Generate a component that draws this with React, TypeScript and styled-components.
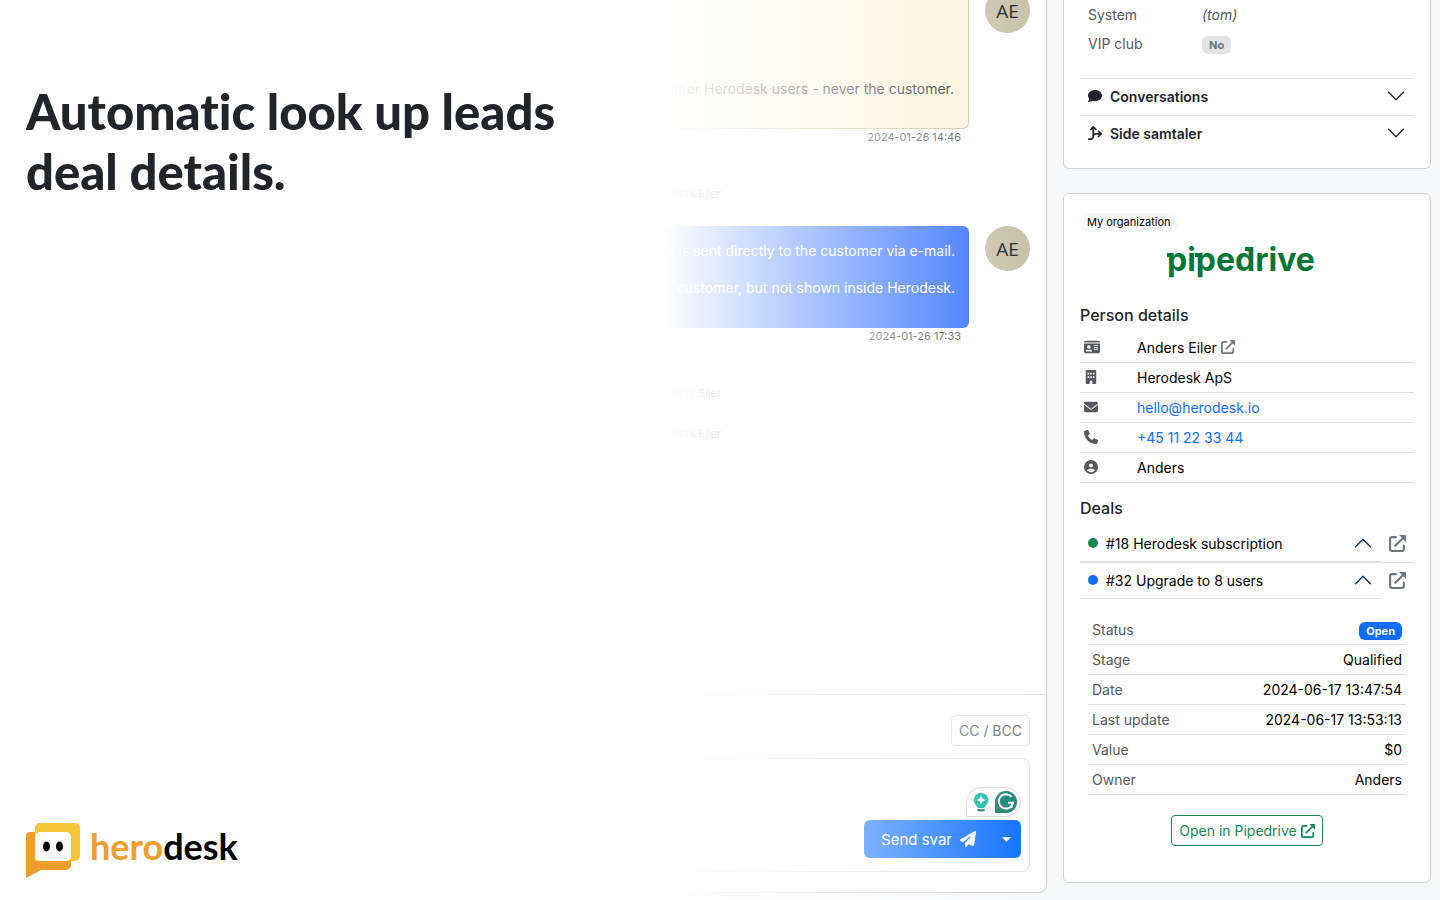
import React from 'react';
import styled, { createGlobalStyle, css } from 'styled-components';
import {
  FaComment, FaArrowsSplitUpAndLeft, FaIdCard, FaBuilding, FaEnvelope, FaPhone,
  FaCircleUser, FaPaperPlane,
} from 'react-icons/fa6';

const GlobalStyle = createGlobalStyle`
  *, *::before, *::after { box-sizing: border-box; }
  body { margin: 0; background: #f7f8fa; color: #212529; font: 14px/21px Inter, "Liberation Sans", sans-serif; }
  h1, h2, p { margin: 0; }
  button { font: inherit; color: inherit; background: none; border: 0; padding: 0; cursor: pointer; }
  a { color: #0d6efd; text-decoration: none; }
  svg { display: block; flex: none; }
`;

const Page = styled.div`
  position: relative;
  display: flex;
  gap: 16px;
  min-height: 100vh;
  padding-right: 9px;
  overflow: hidden;
`;

const Conversation = styled.main`
  flex: 1;
  display: flex;
  flex-direction: column;
  margin-bottom: 7px;
  background: #fff;
  border: 1px solid #ced2d6;
  border-width: 0 1px 1px 0;
  border-radius: 0 0 8px 0;
`;

const Thread = styled.div`
  flex: 1;
  display: flex;
  flex-direction: column;
  padding-right: 16px;
`;

const Message = styled.article`
  display: flex;
  align-items: flex-start;
  gap: 16px;
`;

const MessageBody = styled.div`
  flex: 1;
  display: flex;
  flex-direction: column;
  text-align: right;
`;

const Bubble = styled.div<{ $kind: 'note' | 'reply' }>`
  display: flex;
  flex-direction: column;
  gap: 16px;
  margin-left: 40%;
  border-radius: 6px;
  ${({ $kind }) => $kind === 'note' ? css`
    padding: 78px 14px 29px;
    background: #fff5dd;
    color: #212529;
    border: 1px solid #cbbf9f;
    border-top: 0;
    border-radius: 0 0 6px 6px;
  ` : css`
    padding: 14px 14px 30px;
    background: #2f6cff;
    color: #fff;
  `}
`;

const Time = styled.time`
  padding: 0 8px;
  color: #4c5054;
  font-size: 11px;
  line-height: 17px;
`;

const Avatar = styled.div<{ $cut?: boolean }>`
  display: flex;
  align-items: center;
  justify-content: center;
  width: 45px;
  height: 45px;
  margin-top: ${({ $cut }) => ($cut ? '-12px' : '0')};
  border-radius: 50%;
  background: #c6c1aa;
  color: #1c1c1c;
  font: 19px/20px "Open Sans", sans-serif;
`;

const Event = styled.p<{ $gap: number }>`
  width: 70%;
  margin-top: ${({ $gap }) => $gap}px;
  color: #5c6064;
  font-size: 11px;
  line-height: 16px;
  text-align: right;
  & + ${Message} { margin-top: 24px; }
`;

const Composer = styled.section`
  display: flex;
  flex-direction: column;
  align-items: flex-end;
  gap: 12px;
  padding: 20px 16px;
  border-top: 1px solid #dee2e6;
`;

const CopyButton = styled.button`
  height: 31px;
  padding: 0 7px;
  border: 1px solid #dee2e6;
  border-radius: 4px;
  color: #6c757d;
`;

const Editor = styled.div`
  align-self: stretch;
  display: flex;
  flex-direction: column;
  align-items: flex-end;
  gap: 3px;
  padding: 28px 8px 13px;
  border: 1px solid #dee2e6;
  border-radius: 8px;
`;

const Assistant = styled.div`
  display: flex;
  align-items: center;
  gap: 6px;
  height: 30px;
  padding: 0 3px 0 6px;
  border: 1px solid #d3d6e2;
  border-radius: 15px 15px 15px 0;
`;

const SendGroup = styled.div`
  display: flex;
  height: 38px;
  border-radius: 6px;
  background: #0d6efd;
  color: #fff;
  font-size: 15px;
`;

const SendButton = styled.button`
  display: flex;
  align-items: center;
  gap: 8px;
  padding: 0 12px 0 17px;
`;

const SendMenu = styled.button`
  padding: 0 10px 0 14px;
`;

const Side = styled.aside`
  flex: 0 0 368px;
  display: flex;
  flex-direction: column;
  gap: 24px;
  padding-bottom: 17px;
`;

const Card = styled.section<{ $cut?: boolean }>`
  display: flex;
  flex-direction: column;
  padding: ${({ $cut }) => ($cut ? '0 16px 16px' : '16px 16px 36px')};
  border: 1px solid #ced2d6;
  border-radius: 6px;
  background: #fff;
  ${({ $cut }) => $cut && css`
    border-top: 0;
    border-radius: 0 0 6px 6px;
  `}
`;

const Fields = styled.table`
  border-collapse: collapse;
  margin: 0 0 20px 8px;
  color: #55595d;
  th { width: 114px; padding: 4px 0; font-weight: 400; text-align: left; }
  td { padding: 4px 0; }
`;

const Badge = styled.span<{ $tone: 'muted' | 'light' | 'primary' }>`
  display: inline-block;
  padding: 0 7px;
  border-radius: 6px;
  font-size: 11px;
  line-height: 18px;
  vertical-align: middle;
  font-weight: ${({ $tone }) => ($tone === 'light' ? 400 : 700)};
  color: ${({ $tone }) => ({ muted: '#6c757d', light: '#000', primary: '#fff' })[$tone]};
  background: ${({ $tone }) => ({ muted: '#e2e3e5', light: '#f8f9fa', primary: '#0d6efd' })[$tone]};
`;

const Fold = styled.button`
  display: flex;
  align-items: center;
  gap: 8px;
  height: 37px;
  padding: 0 8px 2px;
  border-top: 1px solid #dee2e6;
  font-weight: 600;
  text-align: left;
  span { flex: 1; }
`;

const BrandRow = styled.div`
  display: flex;
  justify-content: center;
  height: 74px;
  margin-right: 12px;
`;

const SectionTitle = styled.h2`
  font-size: 16px;
  line-height: 20px;
  font-weight: 500;
`;

const PersonTable = styled.table`
  width: 100%;
  margin: 7px 0 15px;
  border-collapse: collapse;
  color: #000;
  tr { height: 30px; border-bottom: 1px solid #dee2e6; }
  th { width: 53px; padding: 0 4px; color: #55595d; }
  td { padding: 0 4px; }
`;

const Inline = styled.span`
  display: flex;
  align-items: center;
  gap: 4px;
`;

const IconLink = styled.a`
  display: flex;
  color: #6c757d;
`;

const Deals = styled.div`
  display: flex;
  flex-direction: column;
  margin-top: 8px;
`;

const DealRow = styled.div<{ $open?: boolean }>`
  display: flex;
  align-items: center;
  gap: 8px;
  height: 37px;
  padding-right: 8px;
  border-bottom: 1px solid ${({ $open }) => ($open ? 'transparent' : '#dee2e6')};
`;

const DealToggle = styled.button`
  flex: 1;
  align-self: stretch;
  display: flex;
  align-items: center;
  gap: 8px;
  padding: 0 8px;
  border-bottom: 1px solid #dee2e6;
  color: #000;
  text-align: left;
  span { flex: 1; }
`;

const Dot = styled.i<{ $color: string }>`
  width: 10px;
  height: 10px;
  border-radius: 50%;
  background: ${({ $color }) => $color};
`;

const DealTable = styled.table`
  margin: 15px 8px 20px;
  border-collapse: collapse;
  color: #000;
  tr { height: 30px; border-bottom: 1px solid #dee2e6; }
  th { padding: 0 4px; color: #55595d; font-weight: 400; text-align: left; }
  td { padding: 0 4px; text-align: right; }
`;

const OpenLink = styled.a`
  align-self: center;
  display: flex;
  align-items: center;
  gap: 4px;
  height: 31px;
  padding: 0 7px;
  border: 1px solid #198754;
  border-radius: 4px;
  color: #198754;
`;

const Hero = styled.header`
  position: absolute;
  inset: 0;
  display: flex;
  flex-direction: column;
  justify-content: space-between;
  padding: 81px 26px 21px;
  background: linear-gradient(to right, #fff 46%, rgba(255, 255, 255, 0) 72%);
  pointer-events: none;
`;

const Headline = styled.h1`
  max-width: 560px;
  font: 900 49px/60px Lato, sans-serif;
  font-variant-ligatures: none;
`;

const Logo = styled.div`
  display: flex;
  align-items: flex-start;
  gap: 10px;
  color: #000;
  font: 700 36px/46px Lato, sans-serif;
  em { color: #f09d2e; font-style: normal; }
`;

const Chevron = ({ up, color = '#212529' }: { up?: boolean; color?: string }) => (
  <svg width="20" height="20" viewBox="0 0 16 16" fill={color} aria-hidden="true">
    <path
      transform={up ? 'rotate(180 8 8)' : undefined}
      d="M1.646 4.646a.5.5 0 0 1 .708 0L8 10.293l5.646-5.647a.5.5 0 0 1 .708.708l-6 6a.5.5 0 0 1-.708 0l-6-6a.5.5 0 0 1 0-.708z"
    />
  </svg>
);

const External = ({ size = 14 }: { size?: number }) => (
  <svg width={size} height={size} viewBox="0 0 16 16" fill="none" stroke="currentColor" strokeWidth="2" aria-hidden="true">
    <path d="M6.5 2H3a2 2 0 0 0-2 2v9a2 2 0 0 0 2 2h9a2 2 0 0 0 2-2V10M6 10l7-7" strokeLinecap="round" />
    <path d="M9.500 0H15a1 1 0 0 1 1 1v5.500z" fill="currentColor" stroke="none" />
  </svg>
);

const people = [
  { label: 'Name', icon: <FaIdCard size={16} />, value: <Inline>Anders Eiler <IconLink href="#person" aria-label="Open person"><External /></IconLink></Inline> },
  { label: 'Company', icon: <FaBuilding size={14} />, value: 'Herodesk ApS' },
  { label: 'E-mail', icon: <FaEnvelope size={14} />, value: <a href="mailto:hello@herodesk.io">hello@herodesk.io</a> },
  { label: 'Phone', icon: <FaPhone size={14} />, value: <a href="tel:+4511223344">+45 11 22 33 44</a> },
  { label: 'Owner', icon: <FaCircleUser size={14} />, value: 'Anders' },
];

const deal = [
  ['Status', <Badge $tone="primary">Open</Badge>],
  ['Stage', 'Qualified'],
  ['Date', '2024-06-17 13:47:54'],
  ['Last update', '2024-06-17 13:53:13'],
  ['Value', '$0'],
  ['Owner', 'Anders'],
] as const;

export default function App() {
  return (
    <Page>
      <GlobalStyle />
      <Conversation>
        <Thread>
          <Message>
            <MessageBody>
              <Bubble $kind="note"><p>nd other Herodesk users - never the customer.</p></Bubble>
              <Time>2024-01-26 14:46</Time>
            </MessageBody>
            <Avatar $cut>AE</Avatar>
          </Message>
          <Event $gap={40}>Anders Eiler</Event>
          <Message>
            <MessageBody>
              <Bubble $kind="reply">
                <p>age is sent directly to the customer via e-mail.</p>
                <p>he customer, but not shown inside Herodesk.</p>
              </Bubble>
              <Time>2024-01-26 17:33</Time>
            </MessageBody>
            <Avatar>AE</Avatar>
          </Message>
          <Event $gap={40}>Anders Eiler</Event>
          <Event $gap={25}>Anders Eiler</Event>
        </Thread>
        <Composer>
          <CopyButton type="button">CC / BCC</CopyButton>
          <Editor>
            <Assistant>
              <svg width="16" height="20" viewBox="0 0 16 20" aria-hidden="true">
                <path d="M8 1a7.200 7.200 0 0 0-4.500 12.800L5 16h6l1.500-2.200A7.200 7.200 0 0 0 8 1z" fill="#0ab89e" />
                <path d="M8 3.500l1.600 2.900L12.500 8 9.600 9.600 8 12.500 6.400 9.600 3.500 8l2.900-1.600z" fill="#fff" />
                <path d="M4 17h8c0 1.500-1 2.500-2.200 2.500H6.200C5 19.500 4 18.500 4 17z" fill="#158070" />
              </svg>
              <svg width="22" height="22" viewBox="0 0 22 22" aria-hidden="true">
                <path d="M11 0a11 11 0 0 1 0 22H0V11A11 11 0 0 1 11 0z" fill="#15806f" />
                <path d="M16.500 5.800A7.200 7.200 0 1 0 18 11.800h-5M18.200 11.800l-2 5" fill="none" stroke="#fff" strokeWidth="2" />
              </svg>
            </Assistant>
            <SendGroup>
              <SendButton type="button">Send svar <FaPaperPlane size={16} /></SendButton>
              <SendMenu type="button" aria-label="More send options">
                <svg width="9" height="5" viewBox="0 0 9 5" fill="currentColor" aria-hidden="true"><path d="M0 0h9L4.500 5z" /></svg>
              </SendMenu>
            </SendGroup>
          </Editor>
        </Composer>
      </Conversation>

      <Side>
        <Card $cut>
          <Fields>
            <tbody>
              <tr><th scope="row">System</th><td><i>(tom)</i></td></tr>
              <tr><th scope="row">VIP club</th><td><Badge $tone="muted">No</Badge></td></tr>
            </tbody>
          </Fields>
          <Fold type="button"><FaComment size={14} /><span>Conversations</span><Chevron /></Fold>
          <Fold type="button">
            <FaArrowsSplitUpAndLeft size={14} transform="scale(-1 1)" /><span>Side samtaler</span><Chevron />
          </Fold>
        </Card>

        <Card>
          <div><Badge $tone="light">My organization</Badge></div>
          <BrandRow>
            <svg width="160" height="52" viewBox="0 0 160 52" role="img" aria-label="pipedrive">
              <text x="6" y="40" fill="#017737" fontFamily="Inter, sans-serif" fontSize="32" fontWeight="700">pipedrive</text>
              <g fill="#017737">
                <rect x="6" y="22" width="4" height="4" />
                <rect x="34" y="22" width="4" height="4" />
                <rect x="84" y="16" width="4" height="4" />
              </g>
            </svg>
          </BrandRow>
          <SectionTitle>Person details</SectionTitle>
          <PersonTable>
            <tbody>
              {people.map((p) => (
                <tr key={p.label}><th scope="row" aria-label={p.label}>{p.icon}</th><td>{p.value}</td></tr>
              ))}
            </tbody>
          </PersonTable>
          <SectionTitle>Deals</SectionTitle>
          <Deals>
            <DealRow>
              <DealToggle type="button"><Dot $color="#198754" /><span>#18 Herodesk subscription</span><Chevron up color="#052c65" /></DealToggle>
              <IconLink href="#deal-18" aria-label="Open deal 18"><External size={17} /></IconLink>
            </DealRow>
            <DealRow $open>
              <DealToggle type="button"><Dot $color="#0d6efd" /><span>#32 Upgrade to 8 users</span><Chevron up color="#052c65" /></DealToggle>
              <IconLink href="#deal-32" aria-label="Open deal 32"><External size={17} /></IconLink>
            </DealRow>
          </Deals>
          <DealTable>
            <tbody>
              {deal.map(([label, value]) => (
                <tr key={label}><th scope="row">{label}</th><td>{value}</td></tr>
              ))}
            </tbody>
          </DealTable>
          <OpenLink href="#pipedrive">Open in Pipedrive <External /></OpenLink>
        </Card>
      </Side>

      <Hero>
        <Headline>Automatic look up leads deal details.</Headline>
        <Logo>
          <svg width="54" height="56" viewBox="0 0 54 56" aria-hidden="true">
            <path d="M4 9h36a5 5 0 0 1 5 5v28a5 5 0 0 1-5 5H15L0 55V13a4 4 0 0 1 4-4z" fill="#f09d2e" />
            <path d="M14 0h35a5 5 0 0 1 5 5v28a5 5 0 0 1-5 5H9V5a5 5 0 0 1 5-5z" fill="#f6c638" />
            <rect x="9" y="9" width="36" height="29" rx="5" fill="#fff" />
            <ellipse cx="20.500" cy="23.500" rx="3.500" ry="5" fill="#000" />
            <ellipse cx="33.500" cy="23.500" rx="3.500" ry="5" fill="#000" />
          </svg>
          <span><em>hero</em>desk</span>
        </Logo>
      </Hero>
    </Page>
  );
}
